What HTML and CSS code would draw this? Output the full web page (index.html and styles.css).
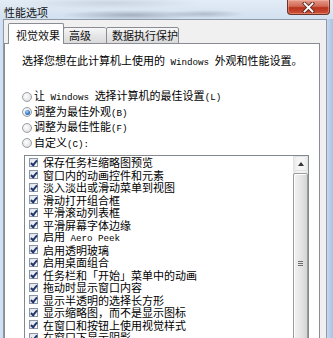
FILE: index.html
```html
<!DOCTYPE html>
<html lang="zh-CN">
<head>
  <meta charset="UTF-8">
  <meta name="viewport" content="width=device-width, initial-scale=1.0">
  <title>性能选项</title>
  <link rel="stylesheet" href="styles.css">
</head>
<body>
  <div class="window">
    <div class="titlebar">
      <span class="title">性能选项</span>
      <div class="close" aria-label="关闭">
        <svg width="13" height="11" viewBox="0 0 13 11">
          <path d="M2.5 1.5 L10.5 9.5 M10.5 1.5 L2.5 9.5" stroke="#5b2a22" stroke-width="3.6" stroke-linecap="square"/>
          <path d="M2.5 1.5 L10.5 9.5 M10.5 1.5 L2.5 9.5" stroke="#fff" stroke-width="1.8" stroke-linecap="square"/>
        </svg>
      </div>
    </div>

    <div class="client">
      <div class="tabs">
        <div class="tab active">视觉效果</div>
        <div class="tab">高级</div>
        <div class="tab">数据执行保护</div>
      </div>

      <div class="panel">
        <p class="intro">选择您想在此计算机上使用的<span class="lat"> Windows </span>外观和性能设置。</p>

        <div class="options">
          <div class="opt"><span class="radio"></span><span class="label">让<span class="lat"> Windows </span>选择计算机的最佳设置<span class="lat">(L)</span></span></div>
          <div class="opt"><span class="radio on"></span><span class="label">调整为最佳外观<span class="lat">(B)</span></span></div>
          <div class="opt"><span class="radio"></span><span class="label">调整为最佳性能<span class="lat">(F)</span></span></div>
          <div class="opt"><span class="radio"></span><span class="label">自定义<span class="lat">(C):</span></span></div>
        </div>

        <div class="listbox">
          <ul class="items">
            <li><span class="check"></span><span>保存任务栏缩略图预览</span></li>
            <li><span class="check"></span><span>窗口内的动画控件和元素</span></li>
            <li><span class="check"></span><span>淡入淡出或滑动菜单到视图</span></li>
            <li><span class="check"></span><span>滑动打开组合框</span></li>
            <li><span class="check"></span><span>平滑滚动列表框</span></li>
            <li><span class="check"></span><span>平滑屏幕字体边缘</span></li>
            <li><span class="check"></span><span>启用<span class="lat"> Aero Peek</span></span></li>
            <li><span class="check"></span><span>启用透明玻璃</span></li>
            <li><span class="check"></span><span>启用桌面组合</span></li>
            <li><span class="check"></span><span>任务栏和「开始」菜单中的动画</span></li>
            <li><span class="check"></span><span>拖动时显示窗口内容</span></li>
            <li><span class="check"></span><span>显示半透明的选择长方形</span></li>
            <li><span class="check"></span><span>显示缩略图，而不是显示图标</span></li>
            <li><span class="check"></span><span>在窗口和按钮上使用视觉样式</span></li>
            <li><span class="check"></span><span>在窗口下显示阴影</span></li>
            <li><span class="check"></span><span>在鼠标指针下显示阴影</span></li>
          </ul>
          <div class="scrollbar">
            <div class="sb-up"><span class="arrow"></span></div>
            <div class="sb-thumb"><span class="grip"></span></div>
          </div>
        </div>
      </div>
    </div>
  </div>
</body>
</html>
```

FILE: styles.css
```css
* {
  box-sizing: border-box;
  margin: 0;
  padding: 0;
}
body {
  font-family: "Noto Sans CJK SC", sans-serif;
  font-size: 11px;
  color: #000;
  background-color: #c8daee;
  overflow: hidden;
}
.lat {
  font-family: "Liberation Mono", monospace;
  font-size: 9.2px;
  white-space: pre;
}
.window {
  width: 333px;
  height: 338px;
  display: flex;
  flex-direction: column;
  overflow: hidden;
  background: linear-gradient(90deg, #d3e2f3, #c2d6ec 2%, #c9dbef 98%, #a9c3e3);
}

/* title bar */
.titlebar {
  height: 22px;
  display: flex;
  justify-content: space-between;
  align-items: flex-start;
  padding: 0 3px 0 4px;
  background:
    radial-gradient(ellipse 70px 5px at 130px 15px, rgba(105, 115, 130, 0.45), transparent),
    radial-gradient(ellipse 40px 4px at 205px 14px, rgba(105, 115, 130, 0.35), transparent),
    radial-gradient(ellipse 90px 6px at 110px 3px, rgba(170, 180, 195, 0.4), transparent),
    linear-gradient(#e3ecf6, #d2e0ef);
}
.title {
  margin-top: 5px;
  line-height: 14px;
  color: #111;
}
.close {
  width: 43px;
  height: 15px;
  display: flex;
  align-items: center;
  justify-content: center;
  border: 1px solid #6e3328;
  border-top: none;
  border-radius: 0 0 4px 4px;
  background-color: #c8432c;
  background-image: linear-gradient(#e59a89, #d06a55 45%, #b8321d 55%, #cc5236);
  box-shadow: inset 0 0 0 1px rgba(255, 200, 190, 0.4);
}

/* dialog client area */
.client {
  flex: 1;
  display: flex;
  flex-direction: column;
  margin: 0 6px 0 3px;
  padding: 3px 6px 0 0;
  background-color: #f0f0f0;
  border: 1px solid #8e9aa8;
  border-bottom: none;
}
.tabs {
  height: 21px;
  display: flex;
  align-items: flex-end;
  padding-left: 4px;
  position: relative;
  z-index: 1;
}
.tab {
  height: 17px;
  min-width: 43px;
  padding-left: 5px;
  line-height: 15px;
  border: 1px solid #898c95;
  border-right: none;
  border-radius: 2px 2px 0 0;
  background: linear-gradient(#f7f7f7, #e6e6e6 50%, #dadada);
  color: #111;
}
.tab:last-child {
  border-right: 1px solid #898c95;
}
.tab.active {
  height: 21px;
  width: 56px;
  padding-left: 7px;
  line-height: 22px;
  border-right: 1px solid #898c95;
  border-bottom: none;
  margin-right: -1px;
  background: #fff;
  position: relative;
  z-index: 2;
}
.panel {
  flex: 1;
  margin-top: -1px;
  padding: 10px 0 0 17px;
  background: #fff;
  border: 1px solid #898c95;
  border-bottom: none;
}
.intro {
  line-height: 13px;
}

/* radio options */
.options {
  margin-top: 20px;
}
.opt {
  height: 15.5px;
  display: flex;
  align-items: center;
  gap: 2px;
}
.label {
  line-height: 14px;
  white-space: nowrap;
}
.radio {
  width: 10px;
  height: 10px;
  flex-shrink: 0;
  border-radius: 50%;
  border: 1px solid #9a9ea6;
  background: radial-gradient(circle at 40% 40%, #fff, #e6e6e6 60%, #c9c9c9);
  display: flex;
  align-items: center;
  justify-content: center;
}
.radio.on::after {
  content: "";
  width: 5px;
  height: 5px;
  border-radius: 50%;
  background: radial-gradient(circle at 40% 35%, #a6d1f5, #2a72c4 60%, #11407e);
}

/* list box */
.listbox {
  margin: 4px 0 0 2px;
  width: 285px;
  height: 200px;
  display: flex;
  border: 1px solid #828790;
  background: #fff;
}
.items {
  flex: 1;
  list-style: none;
  padding-left: 4px;
}
.items li {
  height: 12.5px;
  line-height: 12.5px;
  display: flex;
  align-items: center;
  gap: 5px;
  white-space: nowrap;
}
.check {
  width: 9px;
  height: 9px;
  flex-shrink: 0;
  border: 1px solid #8a95a6;
  background: linear-gradient(135deg, #dfe3ea, #fbfbfb);
  position: relative;
}
.check::after {
  content: "";
  position: absolute;
  left: 2px;
  top: 0;
  width: 2px;
  height: 5px;
  border-right: 2px solid #21376b;
  border-bottom: 2px solid #21376b;
  transform: rotate(40deg);
}

/* scroll bar */
.scrollbar {
  width: 15px;
  display: flex;
  flex-direction: column;
  background: linear-gradient(90deg, #e6e6e6, #f4f4f4 30%, #f4f4f4 70%, #e8e8e8);
}
.sb-up {
  height: 16px;
  display: flex;
  align-items: center;
  justify-content: center;
  border: 1px solid #e2e2e2;
}
.arrow {
  width: 0;
  height: 0;
  border-left: 3px solid transparent;
  border-right: 3px solid transparent;
  border-bottom: 4px solid #333;
}
.sb-thumb {
  margin-top: 2px;
  height: 190px;
  display: flex;
  align-items: center;
  justify-content: center;
  border: 1px solid #9a9a9a;
  border-radius: 2px;
  background: linear-gradient(90deg, #f2f2f2, #e6e6e6 50%, #d4d4d4);
  box-shadow: inset 1px 1px 0 #fff;
}
.grip {
  width: 5px;
  height: 5px;
  border-top: 1px solid #6d6d6d;
  border-bottom: 1px solid #6d6d6d;
  background: linear-gradient(#6d6d6d, #6d6d6d) center / 100% 1px no-repeat;
}
```
